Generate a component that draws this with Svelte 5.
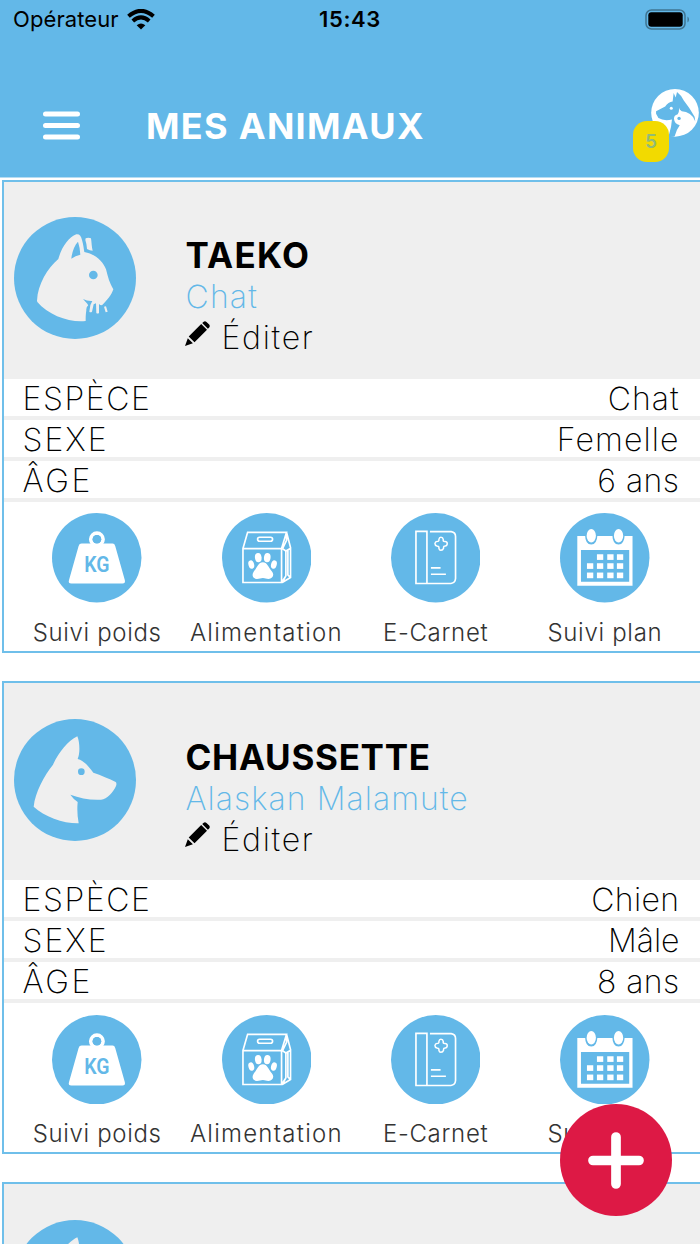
<script>
  // The number after each text is its letter tracking in pixels.
  const pets = [
    {
      kind: 'cat', name: ['TAEKO', 1.3], breed: ['Chat', 1.2],
      rows: [['ESPÈCE', 1.6, 'Chat', 1], ['SEXE', 2, 'Femelle', 1.1], ['ÂGE', 2.6, '6 ans', 0.5]]
    },
    {
      kind: 'dog', name: ['CHAUSSETTE', 0.7], breed: ['Alaskan Malamute', 1.05],
      rows: [['ESPÈCE', 1.6, 'Chien', 0.4], ['SEXE', 2, 'Mâle', 0], ['ÂGE', 2.6, '8 ans', 0.4]]
    },
    { kind: 'dog', name: null, breed: null, rows: [] }
  ];
  const actions = [
    { icon: 'weight', label: 'Suivi poids', track: 0.65 },
    { icon: 'food', label: 'Alimentation', track: 1.25 },
    { icon: 'book', label: 'E-Carnet', track: 0.7 },
    { icon: 'calendar', label: 'Suivi plan', track: 0.7 }
  ];
  const days = [[741, 163], [772, 163], [801, 163], [711, 190], [741, 190], [772, 190], [801, 190], [711, 218], [741, 218], [772, 218], [801, 218]];
</script>

{#snippet avatar(kind)}
  {#if kind === 'cat'}
    <svg class="avatar" viewBox="42 52 366 366">
      <circle cx="225" cy="235" r="183" fill="#63b8e8" />
      <path fill="#efefef" d="M111 303C113 254 143 205 175 178C184 145 206 111 229 104C239 103 243 109 246 121C250 134 251 146 253 157C285 163 309 184 318 209C325 235 327 246 340 269C335 286 320 302 309 314Q304 320 297 313L297 340Q293 343 289 340L288 311L281 314L276 336Q272 339 268 336L272 311L265 317Q258 322 259 332C257 345 257 353 257 364C211 370 145 347 112 307Z" />
      <path fill="#efefef" d="M257 116Q265 112 273 116C275 129 275 142 278 153Q269 153 261 148Q260 132 256 121ZM312 321L318 320L323 336L317 338Z" />
      <path fill="#63b8e8" d="M234 126C223 137 216 157 214 177Q226 168 241 165Q240 144 234 126ZM249 298Q262 305 277 304L273 312L266 320L262 312Z" />
      <circle cx="280" cy="226" r="13" fill="#63b8e8" />
    </svg>
  {:else}
    <svg class="avatar" viewBox="42 57 366 366">
      <circle cx="225" cy="240" r="183" fill="#63b8e8" />
      <path fill="#efefef" d="M232 109C239 126 241 158 233 177C254 183 267 201 280 218C303 226 328 236 347 246Q351 250 348 258C339 277 322 298 303 299C270 301 240 294 211 284Q220 297 233 306Q230 339 236 370C191 371 133 350 101 320C105 278 133 226 159 194C177 155 203 124 232 109Z" />
      <circle cx="244" cy="215" r="10" fill="#63b8e8" />
    </svg>
  {/if}
{/snippet}

{#snippet actionIcon(icon)}
  {#if icon === 'weight'}
    <svg class="round" viewBox="157 39 269 269">
      <circle cx="291.5" cy="173.500" r="134.500" fill="#63b8e8" />
      <circle cx="292" cy="118" r="18.500" fill="none" stroke="#fff" stroke-width="11" />
      <path fill="#fff" d="M246 131H339Q345 131 347 138L376 241Q378 251 369 251H215Q205 251 208 241L237 138Q239 131 246 131Z" />
      <circle cx="292" cy="118" r="13" fill="#63b8e8" />
      <text class="kg" x="254" y="216" textLength="76" lengthAdjust="spacingAndGlyphs">KG</text>
    </svg>
  {:else if icon === 'food'}
    <svg class="round" viewBox="665 39 269 269">
      <circle cx="799.5" cy="173.500" r="134.500" fill="#63b8e8" />
      <g fill="none" stroke="#fff" stroke-width="5">
        <path d="M728 146V248H844V146ZM728 146L742 97H859L844 146M859 97L871 143V233L846 248M859 102V121L847 146L857 153L870 146M857 153V228L846 248M863 151V225L871 233M857 228L848 242H858" />
        <rect x="772" y="112" width="45" height="12" rx="6" />
      </g>
      <g fill="#fff">
        <ellipse cx="774" cy="173" rx="10" ry="14" transform="rotate(-7 774 173)" />
        <ellipse cx="801" cy="173" rx="10" ry="14" transform="rotate(7 801 173)" />
        <ellipse cx="753" cy="194" rx="8.500" ry="13" transform="rotate(-15 753 194)" />
        <ellipse cx="821" cy="194" rx="8.500" ry="13" transform="rotate(15 821 194)" />
        <path d="M788 187C801 187 804 202 814 213C824 225 818 237 805 237C797 237 795 234 788 234C781 234 778 237 770 237C757 237 753 225 761 214C772 202 774 187 788 187Z" />
      </g>
    </svg>
  {:else if icon === 'book'}
    <svg class="round" viewBox="123 39 269 269">
      <circle cx="257.5" cy="173.500" r="134.500" fill="#63b8e8" />
      <g fill="none" stroke="#fff" stroke-width="5">
        <path d="M198 94H231V251H198ZM240 95H304Q317 97 317 110V236Q316 249 303 251H231M243 204H272M243 223H288" />
        <path stroke-width="4.500" d="M267 122V118Q268 112 273 112Q279 112 280 118V123Q281 125 285 125Q292 125 292 131Q292 138 286 138Q281 138 281 141V145Q279 151 273 151Q268 151 267 145V141Q266 138 261 138Q255 137 255 131Q256 125 261 125Q267 125 267 122Z" />
      </g>
    </svg>
  {:else}
    <svg class="round" viewBox="630 39 269 269">
      <circle cx="764.5" cy="173.500" r="134.500" fill="#63b8e8" />
      <path fill="#fff" d="M682 108H848V258H682Z" />
      <path fill="#63b8e8" d="M693 150H838V246H693ZM705 102Q706 134 724 134Q741 134 743 102ZM787 102Q788 134 806 134Q823 134 825 102Z" />
      <ellipse cx="724" cy="107.500" rx="14" ry="20.500" fill="#fff" />
      <ellipse cx="806" cy="107.500" rx="14" ry="20.500" fill="#fff" />
      {#each days as [x, y]}
        <rect {x} {y} width="19" height="17" fill="#fff" />
      {/each}
    </svg>
  {/if}
{/snippet}

<div class="screen">
  <header>
    <div class="status">
      <div class="carrier">
        <span>Opérateur</span>
        <svg width="28" height="21" viewBox="0 0 28 21">
          <g fill="none" stroke="#000" stroke-width="4">
            <path d="M1.500 7.300Q14 -3.600 26.500 7.300" />
            <path d="M5.800 12Q14 4.800 22.200 12" />
          </g>
          <path d="M9.700 16.300Q14 12.500 18.300 16.300L14 20.500Z" />
        </svg>
      </div>
      <div class="clock">15:43</div>
      <svg class="battery" width="44" height="21" viewBox="0 0 44 21">
        <rect x="1" y="1" width="39" height="19" rx="5.500" fill="none" stroke="#3f7491" stroke-width="1.500" />
        <rect x="3.300" y="3.300" width="34.400" height="14.400" rx="3" />
        <path d="M42.500 7.500Q44 8.500 44 10.500Q44 12.500 42.500 13.500Z" fill="#3f7491" />
      </svg>
    </div>
    <div class="bar">
      <svg class="menu" width="37" height="29" viewBox="0 0 37 29">
        <path d="M2.500 3H34.500M2.500 14.500H34.500M2.500 26H34.500" stroke="#fff" stroke-width="5" stroke-linecap="round" />
      </svg>
      <h1>MES ANIMAUX</h1>
      <div class="logo">
        <svg width="48" height="48" viewBox="273 267 142 142">
          <circle cx="344" cy="337.500" r="70.500" fill="#fff" />
          <path fill="#63b8e8" d="M337 304L340 279L346 292L350 276Q362 285 370 301Q386 321 402 349L404 363Q399 348 388 341Q377 333 364 333Q356 328 356 322Q357 335 352 342Q341 345 341 355Q342 370 358 374Q348 387 343 407Q334 410 325 407Q334 379 335 357Q312 363 295 353L288 340V333L315 319Q324 306 337 304Z" />
          <circle cx="333" cy="324" r="4.500" fill="#fff" />
          <circle cx="356" cy="354" r="5" fill="#63b8e8" />
        </svg>
        <span class="badge">5</span>
      </div>
    </div>
  </header>

  <main>
    {#each pets as pet}
      <article>
        <div class="head">
          {@render avatar(pet.kind)}
          {#if pet.name}
            <div class="who">
              <h2 style:letter-spacing="{pet.name[1]}px">{pet.name[0]}</h2>
              <div class="breed" style:letter-spacing="{pet.breed[1]}px">{pet.breed[0]}</div>
              <div class="edit">
                <svg width="25" height="25" viewBox="0 0 25 25">
                  <path d="M0 25L2.800 17.200L7.900 22.300ZM3.700 15.500L16.200 3L22 8.800L9.500 21.300ZM17.200 2.100L18.700 .7Q20 -.3 21.500 .9L24.200 3.600Q25.300 5 24.200 6.400L22.900 7.800Z" />
                </svg>
                <span>Éditer</span>
              </div>
            </div>
          {/if}
        </div>
        {#if pet.rows.length}
          {#each pet.rows as [key, keyTrack, value, valueTrack]}
            <div class="row">
              <span style:letter-spacing="{keyTrack}px">{key}</span>
              <span style:letter-spacing="{valueTrack}px">{value}</span>
            </div>
          {/each}
          <div class="actions">
            {#each actions as a}
              <div class="action">
                {@render actionIcon(a.icon)}
                <span style:letter-spacing="{a.track}px">{a.label}</span>
              </div>
            {/each}
          </div>
        {/if}
      </article>
    {/each}
  </main>

  <button class="fab" aria-label="+">
    <svg width="56" height="57" viewBox="0 0 56 57">
      <path d="M28 5V52M5 28.500H51" stroke="#fff" stroke-width="9.700" stroke-linecap="round" />
    </svg>
  </button>
</div>

<style>
  :global(body) { margin: 0; background: #fff; overflow: hidden; }
  .screen {
    position: relative; width: 700px; height: 1244px; overflow: hidden; background: #fff;
    font-family: Inter, "Liberation Sans", sans-serif; color: #000;
  }
  svg { display: block; flex: none; }
  header { height: 177px; background: #63b8e8; border-bottom: 1px solid #b5dcf2; }
  .status { display: grid; grid-template-columns: 1fr auto 1fr; height: 38px; align-items: center; padding: 0 12px 0 13px; }
  .carrier { display: flex; align-items: center; gap: 8px; font-size: 22px; letter-spacing: 0.1px; }
  .clock { font-size: 22px; font-weight: 600; letter-spacing: 0.6px; margin-left: -1px; }
  .battery { justify-self: end; margin-right: -1px; }
  .bar { display: flex; align-items: center; height: 139px; padding: 0 1px 0 43px; }
  .menu { margin-top: 36px; }
  h1 { margin: 36px 0 0 66px; font-size: 36px; line-height: 44px; font-weight: 700; color: #fff; letter-spacing: 1.3px; white-space: nowrap; }
  .logo { position: relative; margin: 10px 0 0 auto; }
  .badge {
    position: absolute; left: -18px; top: 32px; width: 36px; height: 41px; border-radius: 14px;
    background: #f2da00; color: #91bb78; font-size: 19px; font-weight: 600; line-height: 41px; text-align: center;
  }
  main { padding: 1.6px 0 0 2px; }
  article {
    box-sizing: border-box; height: 473px; margin-bottom: 28.4px; width: 710px;
    border: 2px solid #6fbfea; background: #fff;
  }
  .head { display: flex; height: 197px; background: #efefef; }
  .avatar { width: 122px; height: 122px; margin: 35.7px 0 0 10px; }
  .who { margin: 53.600px 0 0 49.5px; white-space: nowrap; }
  h2 { margin: 0; font-size: 35px; line-height: 41px; font-weight: 700; }
  .breed { font-size: 32px; line-height: 41px; font-weight: 200; color: #63b8e8; }
  .edit { display: flex; gap: 12px; font-size: 32px; line-height: 41px; font-weight: 200; letter-spacing: 1.7px; }
  .edit svg { margin: 3.500px 0 0 -1px; }
  .row {
    box-sizing: border-box; height: 41px; width: 696px; padding: 0 20.5px 0 18.5px; border-bottom: 4px solid #efefef;
    display: flex; justify-content: space-between; font-size: 32px; line-height: 40px; font-weight: 200;
  }
  .actions { display: grid; grid-template-columns: repeat(4, 169.25px); margin: 11.6px 0 0 8.5px; }
  .action { display: flex; flex-direction: column; align-items: center; }
  .round { width: 89.5px; height: 89.5px; }
  .action span { margin-top: 14.400px; font-size: 24px; line-height: 32px; font-weight: 300; color: #333; white-space: nowrap; }
  .kg { font: 600 68px Roboto, sans-serif; fill: #63b8e8; }
  .fab {
    position: absolute; left: 560px; top: 1104px; width: 112px; height: 112px; padding: 0; border: 0; border-radius: 50%;
    background: #dd1945; display: flex; align-items: center; justify-content: center;
  }
</style>
